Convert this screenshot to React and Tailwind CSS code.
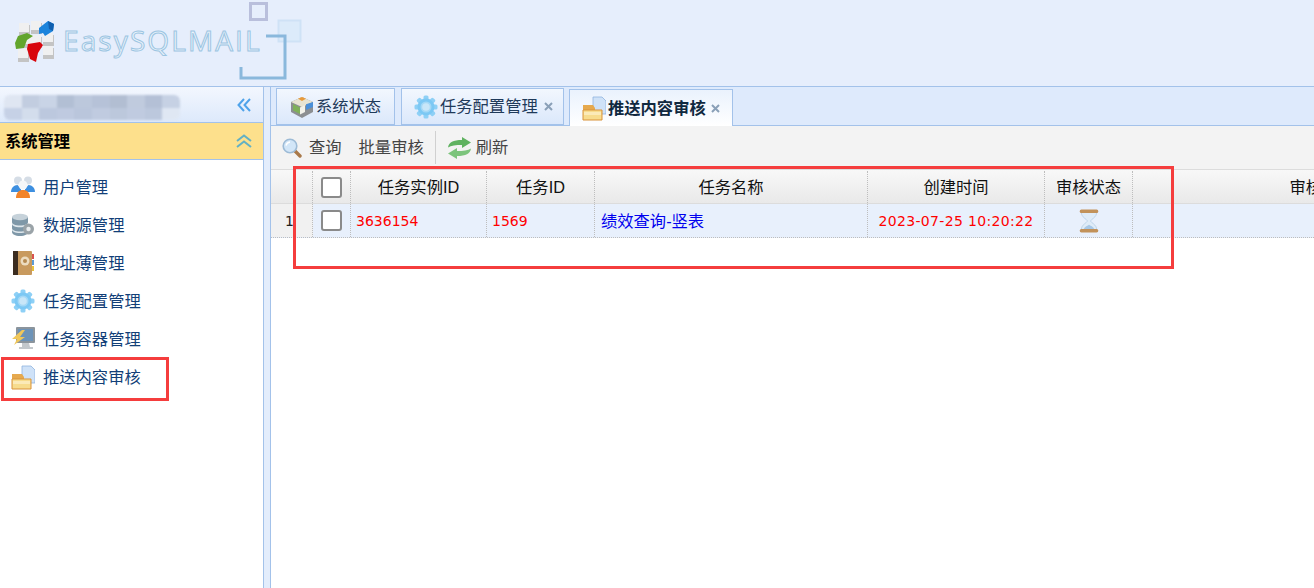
import React from 'react';

const CJK = 'font-["Liberation_Sans","Noto_Sans_CJK_SC",sans-serif]';

function UserIcon() {
  return (
    <svg width="24" height="24" viewBox="0 0 24 24" className="blur-[0.3px]">
      <circle cx="7" cy="5.500" r="4" fill="#d5dde6" />
      <circle cx="17" cy="5.500" r="4" fill="#d5dde6" />
      <path d="M0 17c0-4 3-7 6.500-7l3.500 3v4z" fill="#3d8fe0" />
      <path d="M24 17c0-4-3-7-6.500-7L14 13v4z" fill="#3d8fe0" />
      <circle cx="12" cy="10" r="4.500" fill="#f4f6f8" />
      <path d="M5 23c0-5.500 3-8 7-8s7 2.500 7 8z" fill="#f2842a" />
    </svg>
  );
}

function DbIcon() {
  return (
    <svg width="24" height="24" viewBox="0 0 24 24" className="blur-[0.3px]">
      <path d="M1 4v15c0 2 3 4 8 4s8-2 8-4V4z" fill="#7f98a8" />
      <ellipse cx="9" cy="4" rx="8" ry="3.300" fill="#c6d2da" />
      <path d="M1 9c0 2 3 3.500 8 3.500s8-1.500 8-3.500v1.800c0 2-3 3.500-8 3.500s-8-1.500-8-3.500z" fill="#dfe7ec" />
      <path d="M1 15c0 2 3 3.500 8 3.500s8-1.500 8-3.500v1.500c0 2-3 3.500-8 3.500s-8-1.500-8-3.500z" fill="#dfe7ec" />
      <circle cx="17.500" cy="16" r="5.500" fill="#9aa3a8" />
      <circle cx="17.500" cy="16" r="2.200" fill="#e8ecee" />
    </svg>
  );
}

function BookIcon() {
  return (
    <svg width="24" height="26" viewBox="0 0 24 26" className="blur-[0.3px]">
      <rect x="2" y="1" width="19" height="24" rx="1" fill="#c89a5e" />
      <rect x="2" y="1" width="5" height="24" fill="#3b2c20" />
      <rect x="21" y="4" width="2" height="5" fill="#d9534f" />
      <rect x="21" y="10" width="2" height="5" fill="#5b9bd5" />
      <rect x="21" y="16" width="2" height="5" fill="#e8c13c" />
      <circle cx="14" cy="11" r="4.500" fill="#ecdcc0" />
      <circle cx="14" cy="11" r="2" fill="#b58a50" />
    </svg>
  );
}

function GearIcon() {
  return (
    <svg width="24" height="24" viewBox="0 0 24 24" className="blur-[0.3px]">
      <g fill="#8ed0f6">
        <rect x="9.500" y="0.500" width="5" height="23" rx="1.500" />
        <rect x="9.500" y="0.500" width="5" height="23" rx="1.500" transform="rotate(45 12 12)" />
        <rect x="9.500" y="0.500" width="5" height="23" rx="1.500" transform="rotate(90 12 12)" />
        <rect x="9.500" y="0.500" width="5" height="23" rx="1.500" transform="rotate(135 12 12)" />
      </g>
      <circle cx="12" cy="12" r="8.500" fill="#7cc8f4" />
      <circle cx="12" cy="12" r="5.500" fill="#a4d8f6" />
      <circle cx="12" cy="12" r="3.800" fill="#c8e6f8" />
    </svg>
  );
}

function MonitorIcon() {
  return (
    <svg width="24" height="26" viewBox="0 0 24 26" className="blur-[0.3px]">
      <rect x="5" y="1" width="19" height="16" rx="1" fill="#8b949c" />
      <rect x="7" y="3" width="15" height="12" fill="#6c93b8" />
      <path d="M11 17h7l1 4h3v2H8v-2h3z" fill="#c3c8cc" />
      <path d="M11 4 1 13h5l-3 6 11-8H9l5-7z" fill="#f0c75a" />
    </svg>
  );
}

function FolderIcon() {
  return (
    <svg width="24" height="25" viewBox="0 0 24 25" className="blur-[0.3px]">
      <path d="M11 1h9l4 4v13H11z" fill="#cfe2f8" stroke="#8fb4de" strokeWidth="0.800" />
      <path d="M1 9h10l2 3v12H1z" fill="#e6a94e" />
      <path d="M1 14h19v10H1z" fill="#f7dc8e" stroke="#d9933a" />
      <path d="M2 16h17v3H2z" fill="#fbeab8" />
    </svg>
  );
}

function BoxIcon() {
  return (
    <svg width="24" height="24" viewBox="0 0 24 24" className="blur-[0.3px]">
      <path d="M12 2 23 7v10l-11 6L1 17V7z" fill="#8c8f92" />
      <path d="M12 2 23 7l-11 5L1 7z" fill="#e8e4d2" />
      <path d="M8 3.800 12 2l4 1.800L12 6z" fill="#e89a3a" />
      <path d="M16 9.300 23 7v5l-7 3z" fill="#4a8fd8" />
      <path d="M3 9l7 3.500V19l-7-3.500z" fill="#7fb05a" />
      <path d="M10 12.500 15 10v7l-5 2.500z" fill="#f2f2ea" />
    </svg>
  );
}

function SearchIcon() {
  return (
    <svg width="20" height="20" viewBox="0 0 20 20">
      <path d="m12.500 12.500 5.500 5.500" stroke="#a9794a" strokeWidth="3.400" strokeLinecap="round" />
      <circle cx="8" cy="8" r="6.800" fill="#d2e6f8" stroke="#9dbbd6" strokeWidth="1.600" />
      <path d="M4 7.500c.5-2 2-3.300 4-3.500" stroke="#fff" strokeWidth="1.400" fill="none" />
    </svg>
  );
}

function RefreshIcon() {
  return (
    <svg width="23" height="22" viewBox="0 0 23 22" className="blur-[0.3px]">
      <path d="M0 10.500C1 5 5 3 14 3V0l9 5.500-9 5.500V8C8 8 3 8.500 0 10.500z" fill="#5fb260" />
      <path d="M23 11.500C22 17 18 19 9 19v3L0 16.500 9 11v3c6 0 11-.5 14-2.500z" fill="#7cc47c" />
    </svg>
  );
}

function Hourglass() {
  return (
    <svg width="22" height="24" viewBox="0 0 20 22" className="blur-[0.3px]">
      <path d="M3 3h14c0 5-5 6-5.500 8 .5 2 5.500 3 5.500 8H3c0-5 5-6 5.500-8C8 9 3 8 3 3z" fill="#dfecf8" stroke="#a9c6e0" strokeWidth="0.600" />
      <path d="M5 18.500c1-2.500 4-3 5-4 1 1 4 1.500 5 4z" fill="#a8c8e6" />
      <rect x="1.500" y="0.500" width="17" height="3.200" rx="1.500" fill="#c2925a" />
      <rect x="1.500" y="18.300" width="17" height="3.200" rx="1.500" fill="#c2925a" />
    </svg>
  );
}

function CloseX({ className }) {
  return (
    <svg width="9" height="9" viewBox="0 0 9 9" className={className} stroke="#8aa0b8" strokeWidth="2" fill="none">
      <path d="M1 1l7 7M8 1 1 8" />
    </svg>
  );
}

function LogoCubes() {
  // 3x3 block of grey cubes with the three coloured ones on top
  const cubes = [[6, 4], [18, 2], [8, 16], [30, 14], [5, 30], [30, 27], [18, 16]];
  return (
    <svg width="42" height="44" viewBox="0 0 42 44" className="shrink-0 blur-[0.4px]">
      {cubes.map(([x, y]) => (
        <g key={`${x}-${y}`}>
          <rect x={x} y={y + 2} width="11" height="11" fill="#c4c4c4" />
          <rect x={x} y={y} width="10" height="9" fill="#f0f0f0" />
        </g>
      ))}
      <path d="M26 9 35 2l6 3-1 7-8 5-2-3-4 1z" fill="#1c84dc" />
      <path d="M35 2l6 3-1 7-4-2z" fill="#0f5fb0" />
      <path d="M2 24 5 17l9-3 6 3-6 4-3 8-8 1z" fill="#62a52c" />
      <path d="M14 30l1-5 12-2 3 3-5 8-2 9-6-3-2-7z" fill="#d8060c" />
    </svg>
  );
}

function BlurredName() {
  const shades = [
    '#dfe6f2', '#c2cde0', '#c9d4e6', '#b2bfd4', '#bcc8dc', '#b6c2d8', '#b2bed2', '#c0cbde', '#b4c0d6', '#c6d1e4',
    '#c6d1e6', '#d3ddec', '#bcc8de', '#bfcae0', '#bac6dc', '#c0cbe0', '#bcc8dc', '#c0cbe0', '#bcc8dd', '#dfe7f3',
  ];
  return (
    <div className="absolute left-[4px] top-[8px] grid h-[25px] w-[176px] grid-cols-10 grid-rows-2 overflow-hidden rounded-[6px] blur-[1px]">
      {shades.map((c, i) => (
        <div key={i} style={{ backgroundColor: c }} />
      ))}
    </div>
  );
}

const menu = [
  { label: '用户管理', icon: <UserIcon /> },
  { label: '数据源管理', icon: <DbIcon /> },
  { label: '地址薄管理', icon: <BookIcon /> },
  { label: '任务配置管理', icon: <GearIcon /> },
  { label: '任务容器管理', icon: <MonitorIcon /> },
  { label: '推送内容审核', icon: <FolderIcon /> },
];

const cellBorder = 'border-r border-dotted border-[#bdbdbd]';

function HeadCell({ children }) {
  return <div className={`flex items-center justify-center whitespace-nowrap ${cellBorder}`}>{children}</div>;
}

function Tab({ icon, label, children, active, className }) {
  return (
    <div
      className={`flex h-[37px] items-center border border-[#a3c2ea] ${className} ${
        active
          ? 'mb-[-1px] border-b-0 bg-gradient-to-b from-[#eaf2fd] to-white font-bold text-[#10283f]'
          : 'bg-gradient-to-b from-[#f2f7fe] to-[#dbe8fb] text-[#1f3a5a]'
      }`}
    >
      {icon}
      <span className="ml-[2px] whitespace-nowrap">{label}</span>
      {children}
    </div>
  );
}

export default function App() {
  return (
    <div className={`relative flex h-[588px] w-[1314px] flex-col overflow-hidden bg-white text-[16.300px] ${CJK}`}>
      {/* top banner */}
      <header className="relative flex h-[87px] shrink-0 items-start border-b border-[#a3c2ea] bg-[#e6eefc] pl-[13px] pt-[19px]">
        <LogoCubes />
        <span className='ml-[8px] mt-[2px] font-["Open_Sans",sans-serif] text-[28px] leading-[38px] tracking-[2.100px] text-[#e8f2fb] [-webkit-text-stroke:1px_#9cc5e2]'>
          EasySQLMAIL
        </span>
        <svg width="70" height="82" viewBox="0 0 70 82" className="absolute left-[236px] top-0">
          <rect x="14.500" y="3.500" width="16" height="16" fill="none" stroke="#b9bfdc" strokeWidth="3" />
          <rect x="42.500" y="20.500" width="22" height="21" fill="#dcebfa" stroke="#cfe2f6" strokeWidth="2" />
          <path d="M30 36h19v42H5V67" fill="none" stroke="#8ab8dc" strokeWidth="3" />
        </svg>
      </header>

      <div className="flex min-h-0 flex-1">
        {/* left menu */}
        <aside className="flex w-[263px] shrink-0 flex-col">
          <div className="relative flex h-[36px] shrink-0 items-center justify-end border-b border-[#a3c2ea] bg-gradient-to-b from-[#f3f7fe] to-[#dde9fb] pr-[12px]">
            <BlurredName />
            <svg width="14" height="14" viewBox="0 0 14 14" fill="none" stroke="#4fa3ea" strokeWidth="2">
              <path d="M7 1 1.500 7 7 13M13 1 7.500 7 13 13" />
            </svg>
          </div>
          <div className="flex h-[37px] shrink-0 items-center justify-between border-b border-[#a3c2ea] bg-[#fde08c] pl-[5px] pr-[11px] font-bold text-black">
            <span>系统管理</span>
            <svg width="16" height="14" viewBox="0 0 16 14" fill="none" stroke="#62b0c4" strokeWidth="2">
              <path d="M1 7 8 1.500 15 7M1 13 8 7.500 15 13" />
            </svg>
          </div>
          <nav className="flex flex-col pt-[8px]">
            {menu.map((item) => (
              <div key={item.label} className="flex h-[38.100px] items-center text-[#123f78]">
                <span className="flex w-[43px] justify-center pl-[5px] pr-[2px]">{item.icon}</span>
                <span className="whitespace-nowrap">{item.label}</span>
              </div>
            ))}
          </nav>
        </aside>

        <div className="w-[8px] shrink-0 border-x border-[#a3c2ea] bg-[#e3edfc]" />

        {/* main panel */}
        <main className="flex min-w-0 flex-1 flex-col">
          <div className="flex h-[39px] shrink-0 items-end border-b border-[#a3c2ea] bg-[#deeafc] pl-[5px]">
            <Tab icon={<BoxIcon />} label="系统状态" className="w-[119px] pl-[13px]" />
            <Tab icon={<GearIcon />} label="任务配置管理" className="ml-[6px] w-[163px] pl-[12px]">
              <CloseX className="ml-[6px]" />
            </Tab>
            <Tab icon={<FolderIcon />} label="推送内容审核" active className="ml-[5px] w-[164px] pl-[12px]">
              <CloseX className="ml-[5px]" />
            </Tab>
          </div>

          <div className="flex h-[43px] shrink-0 items-center bg-[#f3f3f3] pl-[11px] text-[#444]">
            <SearchIcon />
            <span className="ml-[7px]">查询</span>
            <span className="ml-[17px]">批量审核</span>
            <span className="ml-[11px] h-[33px] w-px bg-[#d0d0d0]" />
            <span className="ml-[12px]"><RefreshIcon /></span>
            <span className="ml-[5px]">刷新</span>
          </div>

          <div className="grid h-[35px] shrink-0 grid-cols-[42px_38px_136px_108px_273px_177px_88px_378px] border-y border-[#dcdcdc] bg-gradient-to-b from-[#f8f8f8] to-[#e9e9e9] pt-px text-[#111]">
            <div className={cellBorder} />
            <HeadCell>
              <span className="h-[21px] w-[21px] rounded-[3px] border-2 border-[#8a8a8a] bg-white" />
            </HeadCell>
            <HeadCell>任务实例ID</HeadCell>
            <HeadCell>任务ID</HeadCell>
            <HeadCell>任务名称</HeadCell>
            <HeadCell>创建时间</HeadCell>
            <HeadCell>审核状态</HeadCell>
            <div className="flex items-center justify-center whitespace-nowrap">审核时间</div>
          </div>

          <div className='grid h-[34px] shrink-0 grid-cols-[42px_38px_136px_108px_273px_177px_88px_378px] border-b border-dotted border-[#bdbdbd] bg-[#e8f0fc] font-["DejaVu_Sans","Noto_Sans_CJK_SC",sans-serif] text-[14px] text-[#ff0000]'>
            <div className={`flex items-center justify-end bg-[#f1f1f1] pr-[18px] pt-[2px] text-[#222] ${cellBorder}`}>1</div>
            <HeadCell>
              <span className="h-[21px] w-[21px] rounded-[3px] border-2 border-[#8a8a8a] bg-white" />
            </HeadCell>
            <div className={`flex items-center pl-[5px] pt-[2px] ${cellBorder}`}>3636154</div>
            <div className={`flex items-center pl-[5px] pt-[2px] ${cellBorder}`}>1569</div>
            <div className={`flex items-center pl-[6px] pt-[2px] text-[16.300px] text-[#0000ee] ${CJK} ${cellBorder}`}>
              绩效查询-竖表
            </div>
            <div className={`flex items-center justify-center pt-[2px] tracking-[0.330px] ${cellBorder}`}>2023-07-25 10:20:22</div>
            <HeadCell><Hourglass /></HeadCell>
            <div />
          </div>
        </main>
      </div>

      {/* red annotation boxes drawn over the screenshot */}
      <div className="absolute left-[1px] top-[357px] h-[44px] w-[168px] border-[3px] border-[#f53d3d]" />
      <div className="absolute left-[293px] top-[166px] h-[103px] w-[881px] border-[3px] border-[#f53d3d]" />
    </div>
  );
}
